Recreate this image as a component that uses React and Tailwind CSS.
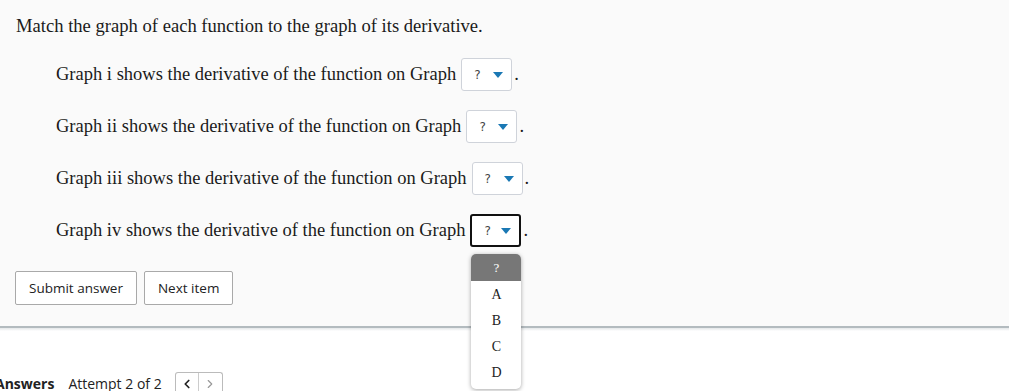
import { ChevronLeft, ChevronRight } from 'lucide-react';

const rows = [
  { label: 'i', open: false },
  { label: 'ii', open: false },
  { label: 'iii', open: false },
  { label: 'iv', open: true },
];

const Select = ({ open }) => (
  <div className="relative ml-[5px]">
    <div
      className={`flex h-[33px] w-[51px] items-center justify-between bg-white pl-[12px] pr-[8px] ${
        open ? 'rounded-[3px] border-2 border-[#111]' : 'rounded-[3px] border border-[#cfd3da]'
      }`}
    >
      <span className="text-[12px] text-[#444]" style={{ fontFamily: '"DejaVu Sans", sans-serif' }}>?</span>
      <svg width="10" height="6" viewBox="0 0 10 6">
        <path d="M0 0 L10 0 L5 6 Z" fill="#1a78b4" />
      </svg>
    </div>
    {open && (
      <div className="absolute left-px top-[40px] z-10 w-[50px] overflow-hidden rounded-[5px] bg-white shadow-[0_1px_4px_rgba(0,0,0,0.35)]">
        <div className="flex h-[27px] items-center justify-center bg-[#777] text-[13px] text-white">?</div>
        {['A', 'B', 'C', 'D'].map((l) => (
          <div key={l} className="flex h-[26px] items-center justify-center text-[14px] text-[#222]">
            {l}
          </div>
        ))}
        <div className="h-[4px]" />
      </div>
    )}
  </div>
);

const App = () => {
  return (
    <div className="h-[391px] w-[1009px] overflow-hidden bg-white">
      <div className="bg-[#fafafa] pb-[21px]" style={{ fontFamily: '"Liberation Serif", serif' }}>
        <div className="px-4 pt-[11px] text-[18.6px] leading-[30px] text-[#1a1a1a]">
          Match the graph of each function to the graph of its derivative.
        </div>
        <div className="mt-[17px] flex flex-col gap-[19px] pl-[56px]">
          {rows.map((r) => (
            <div key={r.label} className="flex h-[33px] items-center text-[18.5px] text-[#1a1a1a]">
              <span>Graph {r.label} shows the derivative of the function on Graph</span>
              <Select open={r.open} />
              <span className="ml-[2px]">.</span>
            </div>
          ))}
        </div>
        <div
          className="mt-[24px] flex gap-[7px] pl-[15px]"
          style={{ fontFamily: '"Open Sans", sans-serif' }}
        >
          <button className="h-[34px] rounded-[2px] border border-[#a9a9a9] bg-white px-[13px] text-[13.5px] font-medium text-[#222]">
            Submit answer
          </button>
          <button className="h-[34px] rounded-[2px] border border-[#a9a9a9] bg-white px-[13px] text-[13.5px] font-medium text-[#222]">
            Next item
          </button>
        </div>
      </div>
      <div className="h-[2px] bg-[#b3bbbf]" />
      <div className="h-[3px] bg-gradient-to-b from-[#e4e7e9] to-white" />
      <div
        className="mt-[41px] flex items-center pl-0"
        style={{ fontFamily: '"Open Sans", sans-serif' }}
      >
        <span className="ml-[-5px] text-[14px] font-bold text-[#222]">Answers</span>
        <span className="ml-[14px] text-[14px] text-[#222]">Attempt 2 of 2</span>
        <div className="ml-[13px] flex h-[22px] rounded-t-[3px] border border-b-0 border-[#bbb]">
          <div className="flex w-[23px] items-center justify-center border-r border-[#ccc]">
            <ChevronLeft size={14} strokeWidth={3} color="#222" />
          </div>
          <div className="flex w-[23px] items-center justify-center">
            <ChevronRight size={14} strokeWidth={2} color="#999" />
          </div>
        </div>
      </div>
    </div>
  );
};

export default App;
